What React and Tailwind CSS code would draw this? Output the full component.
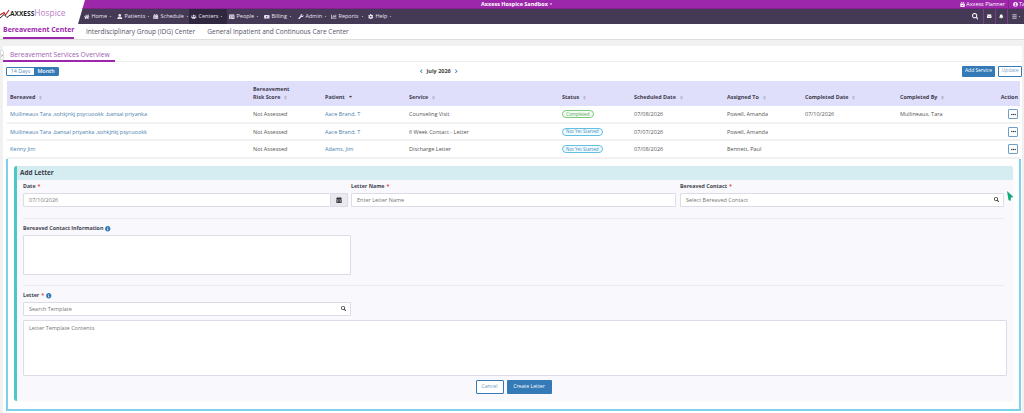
import React from "react";
import { FaHome, FaUser, FaCalendarAlt, FaUsers, FaIdCard, FaMoneyBill, FaWrench, FaChartBar, FaCog, FaSearch, FaEnvelope, FaBell, FaBars, FaCaretDown, FaInfoCircle, FaEllipsisH, FaChevronLeft, FaChevronRight, FaSort, FaSortUp, FaCalendarCheck, FaUserCircle } from "react-icons/fa";

const navItems = [
  ["Home", FaHome, "w-[33px]"],
  ["Patients", FaUser, "w-[36px]"],
  ["Schedule", FaCalendarAlt, "w-[36px]"],
  ["Centers", FaUsers, "w-[38px] pl-[2px] bg-[#2f2740]"],
  ["People", FaIdCard, "w-[37px] pl-[2px]"],
  ["Billing", FaMoneyBill, "w-[34px]"],
  ["Admin", FaWrench, "w-[33px]"],
  ["Reports", FaChartBar, "w-[37px]"],
  ["Help", FaCog, "w-[30px]"],
];

const cols = ["w-[243px]", "w-[72px]", "w-[84px]", "w-[153px]", "w-[72px]", "w-[93px]", "w-[78px]", "w-[95px]", "w-[91px]", "w-[27px]"];

const rows = [
  ["Mullineaux Tara ,sohkjnkj psycuookk ,bansal priyanka", "Aace Brand, T", "Counseling Visit", "Completed", "07/08/2026", "Powell, Amanda", "07/10/2026", "Mullineaux, Tara"],
  ["Mullineaux Tara ,bansal priyanka ,sohkjnkj psycuookk", "Aace Brand, T", "6 Week Contact - Letter", "Not Yet Started", "07/07/2026", "Powell, Amanda", "", ""],
  ["Kenny Jim", "Adams, Jim", "Discharge Letter", "Not Yet Started", "07/08/2026", "Bennett, Paul", "", ""],
];

function Sort({ up }) {
  return up ? <FaSortUp className="inline ml-[3px] text-[5px] text-[#333]" /> : <FaSort className="inline ml-[3px] text-[5px] text-[#b5b5c5]" />;
}

function Th({ w, children, sort = true, up, right }) {
  return (
    <div className={`${w} shrink-0 font-bold text-[5.4px] leading-[8px] text-[#3d3d4d] ${right ? "text-right" : ""}`}>
      {children}
      {sort && <Sort up={up} />}
    </div>
  );
}

function Td({ w, blue, children }) {
  return <div className={`${w} shrink-0 text-[5.5px] whitespace-nowrap ${blue ? "text-[#4a7fb0]" : "text-[#555]"}`}>{children}</div>;
}

function Label({ children, req, info }) {
  return (
    <div className="flex items-center h-[6px] text-[5.3px] font-bold text-[#454552] whitespace-nowrap">
      {children}
      {req && <span className="text-[#e04a4a] ml-[2px]">*</span>}
      {info && <FaInfoCircle className="ml-[2px] text-[5.5px] text-[#2f77b5]" />}
    </div>
  );
}

function Field({ placeholder, icon, className = "" }) {
  return (
    <div className={`flex items-center justify-between h-[14px] bg-white border border-[#dcdce6] rounded-[1px] pl-[5px] pr-[4px] text-[5.5px] text-[#777] ${className}`}>
      <span>{placeholder}</span>
      {icon && <FaSearch className="text-[5px] text-[#333]" />}
    </div>
  );
}

export default function App() {
  return (
    <div className="relative w-[1024px] h-[413px] overflow-hidden bg-[#f1f1f1] font-['Open_Sans',sans-serif]">
      {/* Header */}
      <header className="flex h-[24px] bg-white">
        <div className="w-[78px] shrink-0 flex items-center relative">
          <svg width="11" height="10" viewBox="0 0 11 10" className="absolute left-[0px] top-[9px]">
            <path d="M0 6 L4 3.5 L5.5 6 L9 1" fill="none" stroke="#c0252b" strokeWidth="1.2" />
            <path d="M0 9 L4 5.5 L7 8.5 L10 6" fill="none" stroke="#222" strokeWidth="1" />
          </svg>
          <span className="ml-[10px] mt-[3px] text-[6.6px] font-bold text-[#222]">AXXESS</span>
          <span className="mt-[3px] text-[8.4px] text-[#bb7fc9] whitespace-nowrap">Hospice</span>
        </div>
        <div className="flex-1 min-w-0 flex flex-col [clip-path:polygon(7px_0,100%_0,100%_100%,0_100%)]">
          <div className="flex items-center h-[9px] bg-[#9d27ab] border-b border-[#85218f] text-white text-[5.5px] pl-[403px]">
            <span className="font-bold whitespace-nowrap w-[80px]">Axxess Hospice Sandbox <FaCaretDown className="inline text-[4px]" /></span>
            <div className="ml-auto flex items-center h-full whitespace-nowrap">
              <span className="flex items-center gap-[1px] pr-[3px] border-r border-[#85218f] h-full"><FaCalendarCheck className="text-[5px]" />Axxess Planner</span>
              <span className="flex items-center gap-[1px] w-[15px] pl-[4px] overflow-hidden"><FaUserCircle className="text-[5px] shrink-0" />Ta</span>
            </div>
          </div>
          <nav className="flex items-stretch flex-1 bg-[#453a56] text-[#e8e4ee] text-[5.5px] pl-[6px]">
            {navItems.map(([name, Icon, w]) => (
              <div key={name} className={`flex items-center gap-[2px] whitespace-nowrap shrink-0 ${w}`}>
                <Icon className="text-[5.5px] shrink-0" />
                <span>{name}</span>
                <FaCaretDown className="text-[3px] shrink-0" />
              </div>
            ))}
            <div className="ml-auto flex items-center text-white">
              <FaSearch className="text-[6.5px] mr-[5px]" />
              <span className="flex items-center justify-center w-[12px] h-full border-l border-[#7a3d87]"><FaEnvelope className="text-[4.5px]" /></span>
              <span className="flex items-center justify-center w-[12px] h-full border-l border-[#7a3d87]"><FaBell className="text-[4.5px]" /></span>
              <span className="flex items-center justify-center gap-[1px] w-[17px] h-full border-l border-[#7a3d87]"><FaBars className="text-[5px]" /><FaCaretDown className="text-[3px]" /></span>
            </div>
          </nav>
        </div>
      </header>

      {/* Center tabs */}
      <div className="flex h-[15px] items-stretch bg-white pl-[3px] gap-[12px] text-[6.55px] whitespace-nowrap">
        <div className="w-[71px] border-b-[2px] border-[#9d27ab] font-bold text-[6.9px] text-[#9d27ab] flex items-center">Bereavement Center</div>
        <div className="text-[#55556a] flex items-center">Interdisciplinary Group (IDG) Center</div>
        <div className="text-[#55556a] flex items-center">General Inpatient and Continuous Care Center</div>
      </div>
      <div className="h-[7px] bg-[#f1f1f1] border-t border-[#dedede]" />

      {/* Panel */}
      <div className="relative ml-[3px] w-[1019px] h-[367px] bg-white">
        <div className="absolute -left-[3px] top-[4px] w-[4px] h-[10px] bg-white border border-[#ddd] rounded-r-[2px] flex items-center justify-center">
          <FaChevronRight className="text-[3px] text-[#555]" />
        </div>
        <div className="h-[16px] border-b border-[#eeeeee]">
          <div className="w-[112px] h-[16px] border-b-[2px] border-[#9d27ab] pl-[7px] pt-[4px] text-[6.7px] leading-[9px] text-[#9d5db0] whitespace-nowrap">
            Bereavement Services Overview
          </div>
        </div>

        {/* Toolbar */}
        <div className="flex items-center h-[19px] pl-[3px] pr-[0px] pt-[2px] pb-[3px]">
          <div className="flex h-[9px] w-[53px] text-[5.4px] rounded-[1px] overflow-hidden border border-[#337ab7]">
            <span className="w-[27px] flex items-center justify-center text-[#5a8fc0] bg-white">14 Days</span>
            <span className="flex-1 flex items-center justify-center text-white bg-[#337ab7] font-semibold">Month</span>
          </div>
          <div className="ml-[360px] flex items-center gap-[3px] text-[5.5px] font-bold text-[#444]">
            <FaChevronLeft className="text-[4.5px] text-[#337ab7]" />
            <span>July 2026</span>
            <FaChevronRight className="text-[4.5px] text-[#337ab7]" />
          </div>
          <div className="ml-auto flex gap-[3px] text-[5px]">
            <span className="w-[33px] h-[11px] flex items-center justify-center bg-[#337ab7] text-white rounded-[1px]">Add Service</span>
            <span className="w-[24px] h-[11px] flex items-center justify-center bg-white border border-[#337ab7] text-[#7da6cc] rounded-[1px]">Update</span>
          </div>
        </div>

        {/* Table */}
        <div className="ml-[4px] w-[1013px]">
          <div className="flex items-end h-[25px] bg-[#e0dffb] pl-[3px] pb-[5px]">
            <Th w={cols[0]}>Bereaved</Th>
            <Th w={cols[1]}>Bereavement<br />Risk Score</Th>
            <Th w={cols[2]} up>Patient</Th>
            <Th w={cols[3]}>Service</Th>
            <Th w={cols[4]}>Status</Th>
            <Th w={cols[5]}>Scheduled Date</Th>
            <Th w={cols[6]}>Assigned To</Th>
            <Th w={cols[7]}>Completed Date</Th>
            <Th w={cols[8]}>Completed By</Th>
            <Th w={cols[9]} sort={false} right>Action</Th>
          </div>
          {rows.map((r, i) => (
            <div key={i} className="flex items-center h-[17.6px] pl-[3px] pt-[1px] border-b-[2px] border-[#f1f1f1]">
              <Td w={cols[0]} blue>{r[0]}</Td>
              <Td w={cols[1]}>Not Assessed</Td>
              <Td w={cols[2]} blue>{r[1]}</Td>
              <Td w={cols[3]}>{r[2]}</Td>
              <div className={`${cols[4]} shrink-0 flex items-center`}>
                <span className={`flex items-center h-[8px] px-[3px] rounded-full border text-[4.6px] whitespace-nowrap ${r[3] === "Completed" ? "border-[#7fc67f] text-[#5aa85a] bg-[#f5fcf5]" : "border-[#62bfe0] text-[#3f8fc0] bg-[#f2fbff]"}`}>{r[3]}</span>
              </div>
              <Td w={cols[5]}>{r[4]}</Td>
              <Td w={cols[6]}>{r[5]}</Td>
              <Td w={cols[7]}>{r[6]}</Td>
              <Td w={cols[8]}>{r[7]}</Td>
              <div className={`${cols[9]} shrink-0 flex justify-end`}>
                <span className="w-[10px] h-[10px] flex items-center justify-center border border-[#6f9ec9] rounded-[1px] bg-white">
                  <FaEllipsisH className="text-[5px] text-[#333]" />
                </span>
              </div>
            </div>
          ))}
        </div>

        {/* Add letter */}
        <div className="ml-[3px] w-[1015px] h-[252px] border-2 border-t-0 border-[#7fd0e8] pl-[6px] pt-[7px] bg-white">
          <div className="w-[999px] h-[235px] border-l-[3px] border-[#4fc9bf] rounded-[3px] bg-[#f8f8fd] shadow-[0_0_1px_#d9d9e2]">
            <div className="h-[14px] bg-[#d5edf0] rounded-tr-[3px] pl-[3px] flex items-center text-[6.4px] font-bold text-[#3d3d4d]">Add Letter</div>
            <div className="pl-[6px] pr-[9px] pt-[4px]">
              <div className="flex gap-[3px]">
                <div className="w-[325px]">
                  <Label req>Date</Label>
                  <div className="flex mt-[3px]">
                    <Field placeholder="07/10/2026" className="w-[308px]" />
                    <span className="w-[17px] h-[14px] flex items-center justify-center bg-[#e9e9ef] border border-[#dcdce6] border-l-0">
                      <FaCalendarAlt className="text-[6px] text-[#333]" />
                    </span>
                  </div>
                </div>
                <div className="w-[325px]">
                  <Label req>Letter Name</Label>
                  <Field placeholder="Enter Letter Name" className="mt-[3px]" />
                </div>
                <div className="w-[324px] ml-[1px]">
                  <Label req>Bereaved Contact</Label>
                  <Field placeholder="Select Bereaved Contact" icon className="mt-[3px]" />
                </div>
              </div>
              <div className="h-px bg-[#ebebf3] mt-[11px]" />
              <div className="mt-[7px]">
                <Label info>Bereaved Contact Information</Label>
              </div>
              <div className="w-[328px] h-[40px] mt-[3px] bg-white border border-[#dcdce6] rounded-[1px]" />
              <div className="h-px bg-[#ebebf3] mt-[10px]" />
              <div className="mt-[7px]">
                <Label req info>Letter</Label>
              </div>
              <Field placeholder="Search Template" icon className="w-[328px] mt-[3px]" />
              <div className="w-[984px] h-[56px] mt-[4px] bg-white border border-[#dcdce6] rounded-[1px] pl-[5px] pt-[3px] text-[5.5px] text-[#777]">
                Letter Template Contents
              </div>
              <div className="flex justify-center gap-[3px] mt-[4px] pl-[0px]">
                <span className="w-[28px] h-[14px] flex items-center justify-center bg-white border border-[#337ab7] text-[#6d98c2] text-[5.2px] rounded-[1px]">Cancel</span>
                <span className="w-[45px] h-[14px] flex items-center justify-center bg-[#337ab7] text-white text-[5.2px] rounded-[1px]">Create Letter</span>
              </div>
            </div>
          </div>
        </div>
      </div>

      {/* Pointer */}
      <svg width="7" height="10" viewBox="0 0 7 10" className="absolute left-[1007px] top-[191px]">
        <path d="M0 0 L6.5 6 L4 6.5 L3.5 10 L1.5 9 Z" fill="#15a878" />
      </svg>
    </div>
  );
}
